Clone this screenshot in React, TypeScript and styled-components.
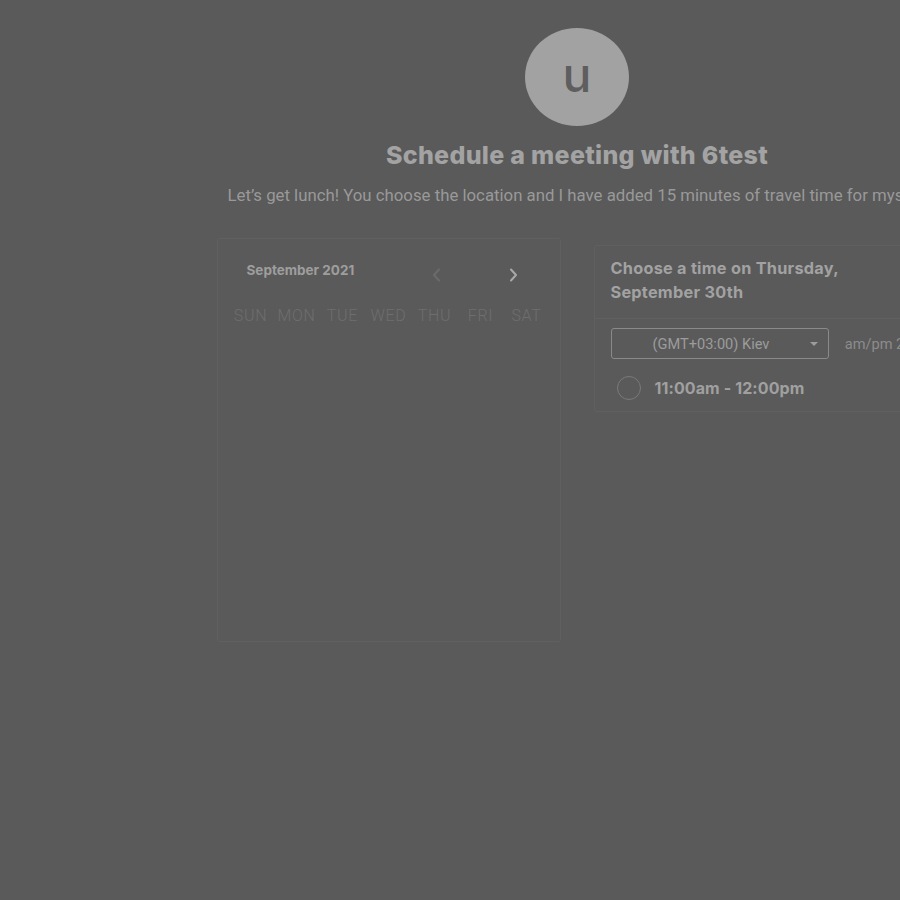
import React from "react";
import styled, { createGlobalStyle } from "styled-components";

const Global = createGlobalStyle`
  html, body { margin: 0; padding: 0; background: #5a5a5a; overflow: hidden; }
  body { font-family: Inter, "Liberation Sans", sans-serif; }
`;

const Page = styled.div`
  width: 1154px;
  height: 900px;
  display: flex;
  flex-direction: column;
  align-items: center;
  padding-top: 28px;
  box-sizing: border-box;
`;

const Avatar = styled.div`
  width: 104px;
  height: 98px;
  border-radius: 50%;
  background: #a2a2a2;
  color: #5e5e5e;
  display: flex;
  align-items: center;
  justify-content: center;
  font-family: Inter, sans-serif;
  font-size: 48px;
  font-weight: 500;
  line-height: 1;
  padding-bottom: 4px;
  box-sizing: border-box;
`;

const Title = styled.h1`
  margin: 13px 0 0;
  font-size: 25px;
  font-weight: 800;
  color: #a3a3a3;
  line-height: 32px;
  letter-spacing: 0.3px;
`;

const Description = styled.p`
  margin: 14px 0 0;
  font-family: Roboto, sans-serif;
  font-size: 16.8px;
  color: #999999;
  line-height: 20px;
  white-space: nowrap;
`;

const Row = styled.div`
  margin-top: 33px;
  display: flex;
  gap: 33px;
  align-items: flex-start;
  width: 721px;
`;

const CalendarCard = styled.div`
  width: 344px;
  height: 404px;
  border: 1px solid #606060;
  border-radius: 3px;
  box-sizing: border-box;
  padding: 23px 10px 0 10px;
`;

const MonthBar = styled.div`
  display: flex;
  align-items: center;
  height: 22px;
  padding-left: 19px;
`;

const MonthLabel = styled.div`
  font-size: 13.5px;
  font-weight: 700;
  color: #9e9e9e;
  flex: 1;
  margin-top: -6px;
`;

const NavButton = styled.button<{ $active?: boolean }>`
  background: none;
  border: none;
  padding: 0;
  width: 14px;
  height: 18px;
  margin-top: 4px;
  display: flex;
  align-items: center;
  justify-content: center;
  color: ${(p) => (p.$active ? "#a9a9a9" : "#6b6b6b")};
  margin-left: ${(p) => (p.$active ? "63px" : "0")};
  margin-right: ${(p) => (p.$active ? "29px" : "0")};
`;

const WeekRow = styled.div`
  display: grid;
  grid-template-columns: repeat(7, 1fr);
  margin-top: 22px;
`;

const WeekDay = styled.div`
  font-family: Roboto, sans-serif;
  font-size: 16px;
  font-weight: 300;
  color: #6e6e6e;
  text-align: center;
  letter-spacing: 0.7px;
`;

const TimePanel = styled.div`
  margin-top: 7px;
  width: 344px;
  border: 1px solid #606060;
  border-radius: 3px;
  box-sizing: border-box;
`;

const PanelHeader = styled.div`
  padding: 10px 16px 14px;
  font-size: 16.3px;
  font-weight: 700;
  color: #a2a2a2;
  line-height: 24px;
  letter-spacing: 0.25px;
  border-bottom: 1px solid #606060;
`;

const Controls = styled.div`
  display: flex;
  align-items: center;
  padding: 9px 16px 0;
  gap: 16px;
`;

const Select = styled.div`
  width: 220px;
  height: 31px;
  border: 1px solid #8a8a8a;
  border-radius: 3px;
  box-sizing: border-box;
  display: flex;
  align-items: center;
  font-family: Roboto, sans-serif;
  font-size: 14.6px;
  color: #9c9c9c;
  padding-left: 41px;
  padding-right: 10px;
`;

const SelectText = styled.span`
  flex: 1;
`;

const Caret = styled.span`
  width: 0;
  height: 0;
  border-left: 4px solid transparent;
  border-right: 4px solid transparent;
  border-top: 4px solid #9c9c9c;
`;

const Toggle = styled.span`
  font-family: Roboto, sans-serif;
  font-size: 14.6px;
  color: #8c8c8c;
  white-space: nowrap;
`;

const Slot = styled.div`
  display: flex;
  align-items: center;
  gap: 14px;
  padding: 17px 17px 11px 22px;
`;

const Radio = styled.span`
  width: 24px;
  height: 24px;
  border-radius: 50%;
  border: 1.5px solid #7a7a7a;
  box-sizing: border-box;
`;

const SlotLabel = styled.span`
  font-size: 16px;
  font-weight: 700;
  color: #a0a0a0;
  letter-spacing: 0.1px;
`;

const Chevron = ({ dir }: { dir: "left" | "right" }) => (
  <svg width="9" height="14" viewBox="0 0 9 14" fill="none">
    <path
      d={dir === "left" ? "M7 1.5L2 7l5 5.5" : "M2 1.5L7 7l-5 5.5"}
      stroke="currentColor"
      strokeWidth="2"
      strokeLinecap="round"
      strokeLinejoin="round"
    />
  </svg>
);

const days = ["SUN", "MON", "TUE", "WED", "THU", "FRI", "SAT"];

export default function App() {
  return (
    <>
      <Global />
      <Page>
        <Avatar>u</Avatar>
        <Title>Schedule a meeting with 6test</Title>
        <Description>
          Let’s get lunch! You choose the location and I have added 15 minutes of travel time for myself.
        </Description>
        <Row>
          <CalendarCard>
            <MonthBar>
              <MonthLabel>September 2021</MonthLabel>
              <NavButton aria-label="Previous month">
                <Chevron dir="left" />
              </NavButton>
              <NavButton $active aria-label="Next month">
                <Chevron dir="right" />
              </NavButton>
            </MonthBar>
            <WeekRow>
              {days.map((d) => (
                <WeekDay key={d}>{d}</WeekDay>
              ))}
            </WeekRow>
          </CalendarCard>
          <TimePanel>
            <PanelHeader>
              Choose a time on Thursday,
              <br />
              September 30th
            </PanelHeader>
            <Controls>
              <Select>
                <SelectText>(GMT+03:00) Kiev</SelectText>
                <Caret />
              </Select>
              <Toggle>am/pm 24h</Toggle>
            </Controls>
            <Slot>
              <Radio />
              <SlotLabel>11:00am - 12:00pm</SlotLabel>
            </Slot>
          </TimePanel>
        </Row>
      </Page>
    </>
  );
}
